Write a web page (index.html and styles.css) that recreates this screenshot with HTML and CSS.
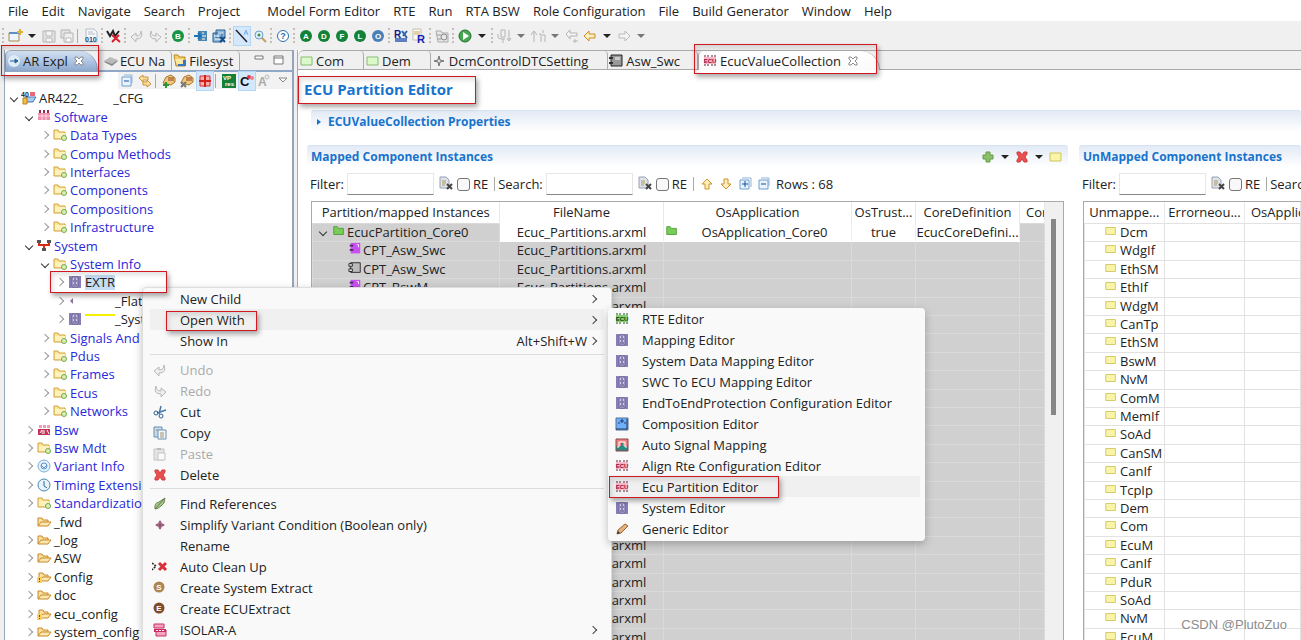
FILE: index.html
```
<!DOCTYPE html>
<html lang="en">
<head>
    <meta charset="UTF-8">
    <meta name="viewport" content="width=device-width, initial-scale=1.0">
    <title>ECU Partition Editor</title>
    <link rel="stylesheet" href="styles.css">
</head>
<body>
    <svg class="sprite" aria-hidden="true">
        <!-- toolbar -->
        <symbol id="i-new" viewBox="0 0 16 16"><path d="M2 5h10v8H2z" fill="#eef4fa" stroke="#a58b4a"/><path d="M2 4h10v2H2z" fill="#5c8fc8"/><path d="M13 1v6M10 4h6" stroke="#e0b030" stroke-width="2"/></symbol>
        <symbol id="i-save" viewBox="0 0 16 16"><path d="M2 3h12v11H2z" fill="#e4e4e4" stroke="#b4b4b4"/><path d="M5 3h6v5H5zM5 10h6v4H5z" fill="#f4f4f4" stroke="#bbb"/></symbol>
        <symbol id="i-saveall" viewBox="0 0 16 16"><path d="M2 2h9v8H2z" fill="#e4e4e4" stroke="#b4b4b4"/><path d="M5 5h9v9H5z" fill="#eee" stroke="#b4b4b4"/><path d="M7 10h5v4H7z" fill="#fff" stroke="#bbb"/></symbol>
        <symbol id="i-bin" viewBox="0 0 16 16"><path d="M3 1h8l3 3v10H3z" fill="#f4f6fa" stroke="#b7bcc8"/><path d="M5 4h5M5 6h7" stroke="#b7bcc8"/><text x="2" y="14" class="glyph" font-size="7" fill="#234a8c">010</text></symbol>
        <symbol id="i-wx" viewBox="0 0 16 16"><path d="M1 3l3 5 3-5 2 5 4-5" fill="none" stroke="#222" stroke-width="2"/><path d="M6 7l8 7M13 7l-7 7" stroke="#d8202c" stroke-width="2"/></symbol>
        <symbol id="i-undo" viewBox="0 0 16 16"><path d="M2 9l5-4v3q5 0 5-5 3 8-5 8v3z" fill="#eee" stroke="#b8b8b8"/></symbol>
        <symbol id="i-redo" viewBox="0 0 16 16"><path d="M14 9L9 5v3Q4 8 4 3q-3 8 5 8v3z" fill="#eee" stroke="#b8b8b8"/></symbol>
        <symbol id="i-b" viewBox="0 0 16 16"><circle cx="8" cy="8" r="6" fill="#169447"/><text x="8" y="11" class="glyph mid" font-size="8">B</text></symbol>
        <symbol id="i-a" viewBox="0 0 16 16"><circle cx="8" cy="8" r="6" fill="#128238"/><text x="8" y="11" class="glyph mid" font-size="8">A</text></symbol>
        <symbol id="i-d" viewBox="0 0 16 16"><circle cx="8" cy="8" r="6" fill="#128238"/><text x="8" y="11" class="glyph mid" font-size="8">D</text></symbol>
        <symbol id="i-f" viewBox="0 0 16 16"><circle cx="8" cy="8" r="6" fill="#128238"/><text x="8" y="11" class="glyph mid" font-size="8">F</text></symbol>
        <symbol id="i-l" viewBox="0 0 16 16"><circle cx="8" cy="8" r="6" fill="#128238"/><text x="8" y="11" class="glyph mid" font-size="8">L</text></symbol>
        <symbol id="i-o" viewBox="0 0 16 16"><circle cx="8" cy="8" r="6" fill="#4a80b8"/><text x="8" y="11" class="glyph mid" font-size="8">O</text></symbol>
        <symbol id="i-import" viewBox="0 0 16 16"><path d="M5 3h9v10H5z" fill="#4a86b0"/><path d="M1 8h6M5 5l3 3-3 3" fill="none" stroke="#1f72b8" stroke-width="2"/><path d="M9 5h2M9 8h4M9 11h3" stroke="#fff"/></symbol>
        <symbol id="i-import2" viewBox="0 0 16 16"><path d="M2 5h9v9H2zM5 2h9v8H5z" fill="#8ab8dc" stroke="#2a6090"/><path d="M3 8h5M7 5h5M4 11h7" stroke="#fff"/><path d="M9 9l5 5M14 9l-5 5" stroke="#174f88" stroke-width="2"/></symbol>
        <symbol id="i-mark" viewBox="0 0 16 16"><path d="M2 2l11 12" stroke="#223" stroke-width="1.5"/><path d="M10 7l2-5 2 5M11 5h2" fill="none" stroke="#7aaee8"/></symbol>
        <symbol id="i-search" viewBox="0 0 16 16"><path d="M9 9l5 5" stroke="#c8a058" stroke-width="2"/><circle cx="7" cy="7" r="4" fill="#dff0fc" stroke="#6b9fc8"/><circle cx="7" cy="7" r="1.5" fill="#3f9050"/></symbol>
        <symbol id="i-help" viewBox="0 0 16 16"><circle cx="8" cy="8" r="5.5" fill="#fff" stroke="#2a6dac"/><text x="8" y="11" class="glyph mid" font-size="9" fill="#2a6dac">?</text></symbol>
        <symbol id="i-rte" viewBox="0 0 16 16"><path d="M2 10h12v4H2z" fill="#5f7fc0"/><path d="M9 3l5 7M14 3l-4 5" stroke="#3560a8" stroke-width="2"/><text x="1" y="10" class="glyph" font-size="10" fill="#101890">R</text></symbol>
        <symbol id="i-rdoc" viewBox="0 0 16 16"><path d="M2 1h8v11H2z" fill="#fafafa" stroke="#c4bfa8"/><path d="M3 4h6M3 6h6" stroke="#c9a858"/><text x="6" y="15" class="glyph" font-size="11" fill="#1020b8">R</text></symbol>
        <symbol id="i-cam" viewBox="0 0 16 16"><path d="M2 3h5l1 2h6v9H4z" fill="#e8e8e8" stroke="#aaa"/><circle cx="10" cy="9" r="3" fill="none" stroke="#888"/><path d="M3 7h4M4 11h3" stroke="#999"/></symbol>
        <symbol id="i-run" viewBox="0 0 16 16"><circle cx="8" cy="8" r="6" fill="#48a850" stroke="#1f7030"/><path d="M6 4l6 4-6 4z" fill="#fff"/></symbol>
        <symbol id="i-step" viewBox="0 0 16 16"><path d="M5 2h4v7H5zM2 6v3q0 2 4 2h3M7 11v4M13 2v10M11 10l2 3 2-3" fill="none" stroke="#b4b4b4"/></symbol>
        <symbol id="i-step2" viewBox="0 0 16 16"><path d="M4 14V4M1 7l3-4 3 4M9 6h2v8M13 2v3M12 7h3v7" fill="none" stroke="#b4b4b4"/></symbol>
        <symbol id="i-last" viewBox="0 0 16 16"><path d="M2 6l4-4v3h7v3H6v3z" fill="#f4f4f4" stroke="#b4b4b4"/><path d="M9 13h5M11 11v4" stroke="#b4b4b4"/></symbol>
        <symbol id="i-back" viewBox="0 0 16 16"><path d="M2 8l5-5v3h6v4H7v3z" fill="#fff0c0" stroke="#c88f28"/></symbol>
        <symbol id="i-fwd" viewBox="0 0 16 16"><path d="M14 8L9 3v3H3v4h6v3z" fill="#f4f4f4" stroke="#bbb"/></symbol>
        <symbol id="i-caret" viewBox="0 0 10 16"><path d="M1 6h8l-4 4z" fill="currentColor"/></symbol>
        <symbol id="i-triangle" viewBox="0 0 12 16"><path d="M2 5h8l-4 4z" fill="#fff" stroke="#888"/></symbol>
        <symbol id="i-min" viewBox="0 0 14 16"><path d="M3 4h8v3H3z" fill="#fff" stroke="#777"/></symbol>
        <symbol id="i-max" viewBox="0 0 14 16"><path d="M3 4h9v8H3zM3 6h9" fill="#fff" stroke="#777"/></symbol>
        <symbol id="i-close" viewBox="0 0 12 12"><path d="M2 2h2l2 2 2-2h2v2L8 6l2 2v2H8L6 8l-2 2H2V8l2-2-2-2z" fill="#fff" stroke="#888"/></symbol>
        <!-- explorer -->
        <symbol id="i-ar" viewBox="0 0 16 16"><circle cx="8" cy="8" r="6" fill="#dcecf8"/><path d="M4 8h6M9 6l3 2-3 2z" fill="#246098" stroke="#246098"/></symbol>
        <symbol id="i-ecu" viewBox="0 0 16 16"><path d="M1 9l6-4 8 3-6 5z" fill="#888"/><path d="M1 8l6-4 8 3-6 4z" fill="#bbb"/></symbol>
        <symbol id="i-fs" viewBox="0 0 16 16"><path d="M2 2h4l1 2h6v9H4z" fill="#f4cf68" stroke="#b88828"/><path d="M6 7h8v6H6z" fill="#3876c0"/><path d="M3 6h8v5H5z" fill="#fae8a8"/></symbol>
        <symbol id="i-collapse" viewBox="0 0 16 16"><path d="M5 2h8v8" fill="none" stroke="#8fb4d8"/><path d="M3 4h9v9H3z" fill="#e8f3fc" stroke="#6f9fd0"/><path d="M5 8h5" stroke="#174f98"/></symbol>
        <symbol id="i-expand" viewBox="0 0 16 16"><path d="M5 2h9v9" fill="none" stroke="#8fb4d8"/><path d="M3 4h9v9H3z" fill="#e8f3fc" stroke="#6f9fd0"/><path d="M5 8h6M8 5v6" stroke="#174f98"/></symbol>
        <symbol id="i-link" viewBox="0 0 16 16"><path d="M2 5l4-3v2h5v3H6v2zM14 11l-4 3v-2H6V9h4V7z" fill="#fae0a0" stroke="#cc9638"/></symbol>
        <symbol id="i-pack" viewBox="0 0 16 16"><path d="M2 10l3-6 5-2 4 3v4l-4 3z" fill="#f0c878" stroke="#a87830"/><path d="M8 4v4M10 4v4M12 4v4" stroke="#943f28"/><path d="M2 12h6M5 9v6" stroke="#2d9438" stroke-width="2"/></symbol>
        <symbol id="i-pack2" viewBox="0 0 16 16"><path d="M2 10l3-6 5-2 4 3v4l-4 3z" fill="#f0c878" stroke="#a87830"/><path d="M8 4v4M10 4v4M12 4v4" stroke="#943f28"/><path d="M2 9l5 5M7 9l-5 5" stroke="#777" stroke-width="2"/></symbol>
        <symbol id="i-grid" viewBox="0 0 16 16"><path d="M3 3h10v10H3z" fill="#f6b0a8" stroke="#d83030"/><path d="M8 2v12M2 8h12" stroke="#d02020" stroke-width="2"/></symbol>
        <symbol id="i-vp" viewBox="0 0 16 16"><path d="M1 1h14v14H1z" fill="#158038"/><text x="2" y="7" class="glyph" font-size="6" fill="#fff">VP</text><text x="4" y="13" class="glyph" font-size="6" fill="#fff">res</text></symbol>
        <symbol id="i-c" viewBox="0 0 16 16"><text x="1" y="13" class="glyph" font-size="13" fill="#111">C</text><circle cx="10" cy="4" r="2" fill="#e83040"/><circle cx="13" cy="5" r="2" fill="#f08088"/></symbol>
        <symbol id="i-ag" viewBox="0 0 16 16"><text x="1" y="13" class="glyph" font-size="12" fill="#aaa">A</text><circle cx="10" cy="4" r="2" fill="#eee" stroke="#bbb"/></symbol>
        <symbol id="i-project" viewBox="0 0 16 16"><path d="M4 7h11l-3 5H5z" fill="#a8cdf0" stroke="#4f74b0"/><text x="0" y="7" class="glyph" font-size="7" fill="#222">40</text><path d="M9 2h5v4H9z" fill="#e86878"/><path d="M2 8h4v6H2z" fill="#f8c040" stroke="#b88020"/></symbol>
        <symbol id="i-sw" viewBox="0 0 16 16"><path d="M2 4h12v7H2z" fill="#f090b0"/><path d="M3 1h2v3H3zM7 1h2v3H7zM11 1h2v3h-2z" fill="#982848"/><path d="M2 7h12M6 5v6M10 5v6" stroke="#fbd4e0"/></symbol>
        <symbol id="i-system" viewBox="0 0 16 16"><path d="M3 4v3h10V4M8 7v4" fill="none" stroke="#d82818" stroke-width="2"/><path d="M1 2h4v3H1zM11 2h4v3h-4zM6 10h4v3H6z" fill="#555"/></symbol>
        <symbol id="i-folder" viewBox="0 0 16 16"><path d="M2 3h4l1 2h6v7H2z" fill="#fae79c" stroke="#d0a23c"/><path d="M3 6h10v5H3z" fill="#fdf2be"/><circle cx="12" cy="11" r="2.5" fill="#d8efb8" stroke="#76a848"/></symbol>
        <symbol id="i-open" viewBox="0 0 16 16"><path d="M2 12V4h4l1 2h5v2" fill="#fae0a0" stroke="#c88828"/><path d="M2 12l3-4h10l-3 4z" fill="#fbe8b0" stroke="#c88828"/></symbol>
        <symbol id="i-openw" viewBox="0 0 16 16"><path d="M3 12V4h4l1 2h4v2" fill="#fae0a0" stroke="#c88828"/><path d="M3 12l4-4h8l-3 4z" fill="#fbe8b0" stroke="#c88828"/><path d="M1 8h5v6H1z" fill="#fbd060"/><path d="M3.500 9v2M3.500 12v1" stroke="#7a4a10"/></symbol>
        <symbol id="i-chip" viewBox="0 0 16 16"><path d="M2 2h12v12H2z" fill="#9c90cc"/><path d="M3 2v12M13 2v12" stroke="#7468a8"/><path d="M5 3h6v10H5z" fill="#d4ccf0" stroke="#5a5484"/><path d="M8 4v2M6 7h4M8 8v2M6 11h4" stroke="#3a3464"/></symbol>
        <symbol id="i-flat" viewBox="0 0 16 16"><path d="M3 8l3-3v6z" fill="#86749c"/></symbol>
        <symbol id="i-bsw" viewBox="0 0 16 16"><path d="M2 7h12v6H2z" fill="#c83058"/><path d="M3 3h3v3H3zM7 3h3v3H7zM11 3h3v3h-3z" fill="#f09cb4"/><path d="M4 11l2-3v4M8 8v4M11 8l2 4" stroke="#fff"/></symbol>
        <symbol id="i-variant" viewBox="0 0 16 16"><circle cx="8" cy="8" r="6" fill="#e6f2fc" stroke="#7cacd4"/><circle cx="8" cy="8" r="3" fill="none" stroke="#5f94c8"/><path d="M5 7l3 3 3-3" fill="none" stroke="#5f94c8"/></symbol>
        <symbol id="i-timing" viewBox="0 0 16 16"><circle cx="8" cy="8" r="6" fill="#e8f4fc" stroke="#4c86ac"/><path d="M8 4v5l3 2" fill="none" stroke="#346890"/></symbol>
        <!-- context menus -->
        <symbol id="i-cut" viewBox="0 0 16 16"><path d="M9 2L7 10M14 6L5 9" stroke="#4a78a8" stroke-width="1.500"/><circle cx="4" cy="9" r="2" fill="none" stroke="#2f6090"/><circle cx="9" cy="12" r="2" fill="none" stroke="#2f6090"/></symbol>
        <symbol id="i-copy" viewBox="0 0 16 16"><path d="M2 2h8v10H2z" fill="#c6daec" stroke="#6890b4"/><path d="M6 5h8v9H6z" fill="#f4f8fc" stroke="#6890b4"/><path d="M8 8h4M8 10h4M8 12h4M4 5h2" stroke="#a09068"/></symbol>
        <symbol id="i-paste" viewBox="0 0 16 16"><path d="M2 3h10v11H2z" fill="#e4e4e4" stroke="#c4c4c4"/><path d="M5 2h4v2H5z" fill="#bbb"/><path d="M6 7h7v7H6z" fill="#fafafa" stroke="#c4c4c4"/></symbol>
        <symbol id="i-delete" viewBox="0 0 16 16"><path d="M3 3h3l2 3 2-3h3v2l-2 3 2 3v2h-3l-2-3-2 3H3v-2l2-3-2-3z" fill="#e85050" stroke="#d03c3c"/></symbol>
        <symbol id="i-leaf" viewBox="0 0 16 16"><path d="M3 13q-1-6 4-7l6-4q0 6-4 8-3 3-6 3z" fill="#a8c888" stroke="#6c8858"/><path d="M3 13l9-10" stroke="#5c7c48"/></symbol>
        <symbol id="i-diamond" viewBox="0 0 16 16"><path d="M8 3l2 3 3 2-3 2-2 3-2-3-3-2 3-2z" fill="#b88098"/><path d="M8 4v8M4 8h8" stroke="#804060"/></symbol>
        <symbol id="i-greydiamond" viewBox="0 0 16 16"><path d="M8 3l1 4 4 1-4 1-1 4-1-4-4-1 4-1z" fill="#ddd" stroke="#707070"/></symbol>
        <symbol id="i-clean" viewBox="0 0 16 16"><path d="M0 4l4 3-4 4" fill="none" stroke="#222" stroke-width="1.500" stroke-dasharray="2 1"/><path d="M7 4l7 7M14 4l-7 7" stroke="#d83038" stroke-width="3"/></symbol>
        <symbol id="i-s" viewBox="0 0 16 16"><circle cx="7" cy="7" r="5.500" fill="#b08450"/><text x="7" y="10" class="glyph mid" font-size="8">S</text></symbol>
        <symbol id="i-e" viewBox="0 0 16 16"><circle cx="7" cy="7" r="5.500" fill="#804c28"/><text x="7" y="10" class="glyph mid" font-size="8">E</text></symbol>
        <symbol id="i-isolar" viewBox="0 0 16 16"><path d="M2 2h10v4H2zM4 8h10v6H4z" fill="#f4a4bc" stroke="#c83060"/><path d="M2 7h12v3H2z" fill="#d02860"/><path d="M4 8.500h8" stroke="#fff" stroke-dasharray="2 1"/></symbol>
        <symbol id="i-ecugreen" viewBox="0 0 16 16"><path d="M2 4h12v7H2z" fill="#84d070"/><path d="M3 2v2M6 2v2M10 2v2M13 2v2M3 11v2M6 11v2M10 11v2M13 11v2" stroke="#234a20"/><text x="8" y="10" class="glyph mid" font-size="6" fill="#103c10">ECU</text></symbol>
        <symbol id="i-ecupink" viewBox="0 0 16 16"><path d="M2 4h12v7H2z" fill="#f8b4c8"/><path d="M3 2v2M6 2v2M10 2v2M13 2v2M3 11v2M6 11v2M10 11v2M13 11v2" stroke="#582038"/><text x="8" y="10" class="glyph mid" font-size="6" fill="#900c38">ECU</text></symbol>
        <symbol id="i-comp" viewBox="0 0 16 16"><path d="M2 2h12v12H2z" fill="#6fb0f8" stroke="#507098"/><path d="M2 13h11V3" fill="none" stroke="#223c60"/><path d="M4 7h2M10 7h2M7 4h2v2H7z" fill="none" stroke="#203870"/></symbol>
        <symbol id="i-signal" viewBox="0 0 16 16"><path d="M2 2h12v7H2z" fill="#f08080"/><path d="M2 9h12v5H2z" fill="#2c8880"/><path d="M3 10h2V5h6v5h2" fill="none" stroke="#fff"/><path d="M7 6h2v8H7z" fill="#2c8880"/><path d="M2 2h12v12H2z" fill="none" stroke="#884848"/></symbol>
        <symbol id="i-pencil" viewBox="0 0 16 16"><path d="M3 13l1-4 7-6 3 2-7 7z" fill="#e8b078" stroke="#94643c"/><path d="M3 13l1-3 2 2z" fill="#333"/></symbol>
        <!-- editor -->
        <symbol id="i-notegreen" viewBox="0 0 16 16"><path d="M3 4h11v8H3z" fill="#d8fac8" stroke="#8cba74"/></symbol>
        <symbol id="i-note" viewBox="0 0 16 16"><path d="M2 4h11v8H2z" fill="#faf4a8" stroke="#cfc45c"/></symbol>
        <symbol id="i-swc" viewBox="0 0 16 16"><path d="M3 2h11v11H3z" fill="#999" stroke="#222"/><path d="M1 4h4v2H1zM1 9h4v2H1z" fill="#333"/><path d="M7 4h5v3H7z" fill="#ccc"/></symbol>
        <symbol id="i-swcgrey" viewBox="0 0 16 16"><path d="M3 2h11v11H3z" fill="#bbb" stroke="#222"/><path d="M1 3h4v3H1zM1 9h4v3H1z" fill="#ddd" stroke="#222"/></symbol>
        <symbol id="i-swcpurple" viewBox="0 0 16 16"><path d="M3 1h11v12H3z" fill="#c850f0"/><path d="M2 3h4v2H2zM2 8h4v2H2z" fill="#502070"/><path d="M10 3h2v3" fill="none" stroke="#fff"/></symbol>
        <symbol id="i-foldergreen" viewBox="0 0 16 16"><path d="M2 3h4l1 2h6v7H2z" fill="#78cc58" stroke="#4f9a38"/></symbol>
        <symbol id="i-plus" viewBox="0 0 16 16"><path d="M6 3h4v3h3v4h-3v3H6v-3H3V6h3z" fill="#8cc068" stroke="#649c48"/></symbol>
        <symbol id="i-up" viewBox="0 0 16 16"><path d="M8 3l5 5h-3v5H6V8H3z" fill="#fdf0b8" stroke="#d0902c"/></symbol>
        <symbol id="i-down" viewBox="0 0 16 16"><path d="M8 13l5-5h-3V3H6v5H3z" fill="#fdf0b8" stroke="#d0902c"/></symbol>
        <symbol id="i-clear" viewBox="0 0 16 16"><path d="M2 1h6l3 3v8H2z" fill="#dde4ee" stroke="#98a0b0"/><path d="M4 5h4M4 7h4M4 9h3" stroke="#b09850"/><path d="M9 8l5 5M14 8l-5 5" stroke="#444" stroke-width="2"/></symbol>
    </svg>

    <div class="app">
        <nav class="menubar">
            <button>File</button><button>Edit</button><button>Navigate</button><button>Search</button><button>Project</button>
            <button class="apart">Model Form Editor</button><button>RTE</button><button>Run</button><button>RTA BSW</button>
            <button>Role Configuration</button><button>File</button><button>Build Generator</button><button>Window</button><button>Help</button>
        </nav>
        <div class="toolbar" id="mainToolbar"></div>

        <div class="workbench">
            <aside class="explorer">
                <div class="tabs">
                    <button class="tab active blue"><svg class="icon"><use href="#i-ar"/></svg>AR Expl<svg class="x"><use href="#i-close"/></svg></button>
                    <button class="tab"><svg class="icon"><use href="#i-ecu"/></svg>ECU Na</button>
                    <button class="tab"><svg class="icon"><use href="#i-fs"/></svg>Filesyst</button>
                    <span class="window-buttons">
                        <button class="tool" aria-label="Minimize"><svg class="icon"><use href="#i-min"/></svg></button>
                        <button class="tool" aria-label="Maximize"><svg class="icon"><use href="#i-max"/></svg></button>
                    </span>
                </div>
                <div class="explorer-tools"><div class="toolbar" id="treeToolbar"></div></div>
                <ul class="tree" id="tree"></ul>
            </aside>

            <main class="editor">
                <div class="tabs">
                    <button class="tab"><svg class="icon"><use href="#i-notegreen"/></svg>Com</button>
                    <button class="tab"><svg class="icon"><use href="#i-notegreen"/></svg>Dem</button>
                    <button class="tab"><svg class="icon"><use href="#i-greydiamond"/></svg>DcmControlDTCSetting</button>
                    <button class="tab tight"><svg class="icon"><use href="#i-swc"/></svg>Asw_Swc</button>
                    <button class="tab active"><svg class="icon"><use href="#i-ecupink"/></svg>EcucValueCollection<svg class="x"><use href="#i-close"/></svg></button>
                </div>
                <h1>ECU Partition Editor</h1>
                <h2 class="section-head properties"><span class="twist"></span>ECUValueCollection Properties</h2>
                <div class="sections">
                    <section>
                        <div class="section-head">
                            <h2>Mapped Component Instances</h2>
                            <div class="section-tools" id="sectionTools"></div>
                        </div>
                        <div class="filter-row">
                            <label for="filter1">Filter:</label><input type="text" id="filter1">
                            <svg class="icon"><use href="#i-clear"/></svg><label class="check"><input type="checkbox">RE</label>
                            <i class="bar"></i>
                            <label for="search1">Search:</label><input type="text" id="search1">
                            <svg class="icon"><use href="#i-clear"/></svg><label class="check"><input type="checkbox">RE</label>
                            <i class="bar"></i>
                            <span class="row-tools" id="rowTools"></span>
                            <span>Rows : 68</span>
                        </div>
                        <div class="table-box">
                            <table class="mapped">
                                <colgroup><col class="c-part"><col class="c-file"><col class="c-os"><col class="c-trust"><col class="c-core"><col></colgroup>
                                <thead><tr><th>Partition/mapped Instances</th><th>FileName</th><th>OsApplication</th><th>OsTrust...</th><th>CoreDefinition</th><th class="cut">Cor</th></tr></thead>
                                <tbody id="mappedRows"></tbody>
                            </table>
                            <div class="scroll"><div class="thumb"></div></div>
                        </div>
                    </section>
                    <section>
                        <div class="section-head"><h2>UnMapped Component Instances</h2></div>
                        <div class="filter-row">
                            <label for="filter2">Filter:</label><input type="text" id="filter2">
                            <svg class="icon"><use href="#i-clear"/></svg><label class="check"><input type="checkbox">RE</label>
                            <i class="bar"></i>
                            <span>Search:</span>
                        </div>
                        <div class="table-box">
                            <table class="unmapped">
                                <colgroup><col class="c-name"><col class="c-name"><col></colgroup>
                                <thead><tr><th>Unmappe...</th><th>Errorneou...</th><th class="cut">OsApplication</th></tr></thead>
                                <tbody id="unmappedRows"></tbody>
                            </table>
                        </div>
                    </section>
                </div>
            </main>
        </div>
    </div>

    <div class="menu context" id="contextMenu"></div>
    <div class="menu submenu" id="openWithMenu"></div>

    <div class="mark mark-explorer"></div>
    <div class="mark mark-title"></div>
    <div class="mark mark-tab"></div>
    <div class="mark mark-extract"></div>
    <div class="mark mark-open"></div>
    <div class="mark mark-partition"></div>
    <div class="watermark">CSDN @PlutoZuo</div>

    <script src="script.js"></script>
</body>
</html>
```
FILE: styles.css
```
* {
    margin: 0;
    padding: 0;
    box-sizing: border-box;
}

body {
    font-family: "Open Sans", "Noto Sans", sans-serif;
    font-size: 13px;
    line-height: 18px;
    color: #222;
    background: #f0f0f0;
    height: 100vh;
    overflow: hidden;
    position: relative;
}

button {
    font: inherit;
    color: inherit;
    background: none;
    border: none;
    white-space: nowrap;
}

.sprite {
    display: none;
}

.glyph {
    font-family: "Liberation Sans", sans-serif;
    font-weight: bold;
}

.mid {
    text-anchor: middle;
}

.mid:not([fill]) {
    fill: #fff;
}

.icon {
    width: 16px;
    height: 16px;
    flex: none;
}

.app {
    height: 100vh;
    display: flex;
    flex-direction: column;
}

/* menu bar and toolbars */
.menubar {
    background: #fff;
    height: 21px;
    display: flex;
    align-items: center;
    gap: 13px;
    padding: 0 8px;
    flex: none;
}

.menubar .apart {
    margin-left: 14px;
}

.toolbar {
    display: flex;
    align-items: center;
    gap: 2px;
    height: 29px;
    padding-left: 2px;
    flex: none;
}

.tool {
    display: flex;
    align-items: center;
    justify-content: center;
    width: 16px;
    height: 18px;
}

.tool.caret {
    width: 14px;
}

.tool.caret .icon {
    width: 10px;
}

.tool.dim {
    color: #777;
}

.tool.on {
    background: #d3e8fa;
    outline: 1px solid #b4d6f4;
}

.grip {
    width: 3px;
    height: 15px;
    border-left: 2px dotted #c4c0b8;
}

.bar {
    width: 4px;
    height: 14px;
    border-left: 1px solid #aaa;
}

.workbench {
    flex: 1;
    min-height: 0;
    display: flex;
    gap: 3px;
    padding-left: 4px;
}

/* tabs */
.tabs {
    display: flex;
    height: 20px;
    flex: none;
    border-top: 1px solid #aaa;
    border-bottom: 1px solid #aaa;
    border-radius: 6px 0 0 0;
    background: #f0f0f0;
}

.tab {
    display: flex;
    align-items: center;
    gap: 2px;
    height: 19px;
    border-right: 1px solid #aaa;
    border-radius: 0 4px 0 0;
}

.tab .x {
    width: 12px;
    height: 12px;
    margin-left: 4px;
}

.tab.active {
    background: linear-gradient(#fff, #fafafa);
    border: 1px solid #aaa;
    border-width: 0 1px 0 1px;
    border-radius: 6px 24px 0 0;
}

.tab.blue {
    background: linear-gradient(#d4e2f4, #90acd0);
    border-color: #7f98bc;
}

/* explorer */
.explorer {
    width: 290px;
    flex: none;
    display: flex;
    flex-direction: column;
    overflow: hidden;
    background: #fff;
    border: solid #94a4ba;
    border-width: 0 2px 0 1px;
}

.explorer .tabs {
    border-bottom: 2px solid #90a8c8;
    height: 22px;
}

.explorer .tab {
    padding-right: 6px;
    gap: 1px;
}

.explorer .tab.blue {
    padding-right: 12px;
    margin-right: 5px;
}

.window-buttons {
    display: flex;
    gap: 3px;
    margin-left: auto;
    padding-right: 6px;
}

.explorer-tools {
    display: flex;
    justify-content: flex-end;
}

.explorer-tools .toolbar {
    height: 17px;
    background: #f2f2f2;
    padding: 0 1px;
}

.tree {
    list-style: none;
}

.tree li {
    display: flex;
    align-items: center;
    gap: 2px;
    height: 18px;
    white-space: nowrap;
}

/* rows average a little over 18px, as in the tables */
.tree li:nth-child(5n+2),
.tree li:nth-child(5n+4),
tbody tr:nth-child(5n+2),
tbody tr:nth-child(5n+4) {
    height: 19px;
}

.tree .blue {
    color: #2a28d8;
}

.l0 { padding-left: 3px; }
.l1 { padding-left: 18px; }
.l2 { padding-left: 34px; }
.l3 { padding-left: 49px; }

.chevron {
    width: 11px;
    height: 18px;
    flex: none;
    display: flex;
    align-items: center;
    justify-content: center;
}

.chevron::before {
    content: "";
    width: 5px;
    height: 5px;
    border: solid #999;
    border-width: 1px 1px 0 0;
    transform: rotate(45deg);
}

.chevron.down::before {
    border-color: #333;
    transform: rotate(135deg);
}

.chevron.none::before {
    display: none;
}

.selected {
    display: block;
    background: #c4dcf4;
    height: 15px;
    line-height: 15px;
}

.blank {
    display: inline-block;
    width: 30px;
    height: 10px;
}

.blank.yellow {
    border-top: 2px solid #f4f000;
}

/* editor */
.editor {
    flex: 1;
    min-width: 0;
    background: #fff;
    border-left: 1px solid #aaa;
    display: flex;
    flex-direction: column;
    overflow: hidden;
}

.editor .tab {
    padding-right: 19px;
}

.editor .tab.tight {
    padding-right: 17px;
}

.editor .tab.active {
    padding: 0 20px 0 3px;
}

h1 {
    font-size: 15px;
    line-height: 24px;
    color: #1873cc;
    padding: 7px 6px 9px;
}

h2 {
    font-size: 12px;
    line-height: 20px;
    color: #1873cc;
}

.section-head {
    display: flex;
    align-items: center;
    justify-content: space-between;
    height: 22px;
    padding: 0 4px;
    border-top: 1px solid #d8e2f2;
    border-radius: 3px 3px 0 0;
    background: linear-gradient(#e2eaf6, #fff);
}

.properties {
    justify-content: flex-start;
    margin: 0 0 13px 13px;
    gap: 7px;
    flex: none;
}

.twist {
    width: 0;
    border: 3px solid transparent;
    border-left: 4px solid #1873cc;
    border-right: none;
    margin-left: 2px;
}

.sections {
    display: grid;
    grid-template-columns: minmax(0, 1fr) 222px;
    gap: 11px;
    padding-left: 9px;
    flex: 1;
    min-height: 0;
}

.sections section {
    min-width: 0;
    overflow: hidden;
    display: flex;
    flex-direction: column;
}

.section-tools,
.row-tools {
    display: flex;
    align-items: center;
    gap: 2px;
}

.filter-row {
    display: flex;
    align-items: center;
    gap: 3px;
    height: 34px;
    padding: 0 3px;
    white-space: nowrap;
    flex: none;
}

.filter-row input[type="text"] {
    width: 87px;
    height: 22px;
    border: 1px solid #e6e6e6;
    border-bottom-color: #888;
    background: #fff;
    margin-right: 1px;
}

.check {
    display: flex;
    align-items: center;
    gap: 3px;
}

.check input {
    appearance: none;
    width: 13px;
    height: 13px;
    border: 1px solid #777;
    border-radius: 3px;
    background: #f8f8f8;
}

.filter-row .bar {
    margin-left: 3px;
    width: 1px;
}

.row-tools {
    gap: 3px;
    padding: 0 1px 0 2px;
}

.table-box {
    display: flex;
    flex: 1;
    min-height: 0;
    overflow: hidden;
    margin: 0 4px;
    border: 1px solid #aaa;
    border-bottom: none;
}

section:last-child .table-box {
    margin-right: 0;
    border-right: none;
}

table {
    table-layout: fixed;
    border-collapse: collapse;
    width: 100%;
    height: 1px;
}

.c-part { width: 187px; }
.c-file { width: 164px; }
.c-os { width: 188px; }
.c-trust { width: 64px; }
.c-core { width: 104px; }
.c-name { width: 80px; }

th {
    font-weight: normal;
    height: 21px;
    border-right: 1px solid #e8e8e8;
}

th.cut {
    text-align: left;
    padding-left: 6px;
}

th,
td {
    overflow: hidden;
    white-space: nowrap;
}

tr {
    height: 18px;
}

td {
    text-align: center;
    border: 1px solid #e2e2e2;
    line-height: 17px;
}

.mapped td {
    background: #d0d0d0;
    border-color: #dadada;
}

.mapped td.white {
    background: #fff;
    border-color: #fff #eee;
}

.cell {
    display: flex;
    align-items: center;
    height: 17px;
}

.cell .icon {
    height: 17px;
    padding-bottom: 3px;
}

.mapped .cell {
    padding-left: 4px;
}

.mapped .cell .icon {
    margin: 0 0 0 3px;
}

.mapped .child {
    padding-left: 34px;
}

.mapped .child .icon {
    margin-left: 0;
}

.mapped .os {
    padding-left: 0;
}

.mapped .os .icon {
    margin-left: 0;
}

.os span {
    flex: 1;
    padding-right: 2px;
}

.unmapped .cell {
    padding-left: 18px;
    gap: 1px;
}

.scroll {
    width: 18px;
    flex: none;
    background: #f0f0f0;
    padding: 17px 6px;
}

.thumb {
    width: 5px;
    height: 196px;
    background: #868686;
}

/* pop-up menus */
.menu {
    position: absolute;
    background: #f9f9f9;
    border-radius: 4px;
    box-shadow: 0 3px 8px rgba(0, 0, 0, 0.25);
}

.context {
    left: 142px;
    top: 287px;
    width: 470px;
    padding: 0 7px 20px;
    border: 1px solid #ddd;
}

.submenu {
    left: 608px;
    top: 308px;
    width: 317px;
    padding: 0 5px 2px 2px;
}

.menu button {
    display: flex;
    align-items: center;
    width: 100%;
    height: 21px;
    padding: 0 6px 0 2px;
    text-align: left;
}

.menu button .icon {
    margin: 0 12px 0 0;
}

.submenu button {
    padding-left: 4px;
}

.menu button.hover {
    background: #f0f0f0;
}

.menu button:disabled {
    color: #aaa;
}

.menu .label {
    flex: 1;
}

.menu .chevron::before {
    border-color: #444;
}

.menu hr {
    border: none;
    border-top: 1px solid #ddd;
    margin: 3px 0 4px;
}

/* highlights drawn over the window */
.mark {
    position: absolute;
    border: 1px solid #d01820;
    box-shadow: 2px 3px 5px rgba(0, 0, 0, 0.35), inset 2px 3px 5px rgba(0, 0, 0, 0.12);
}

.mark-explorer { left: 1px; top: 45px; width: 98px; height: 31px; }
.mark-title { left: 298px; top: 76px; width: 178px; height: 28px; }
.mark-tab { left: 694px; top: 44px; width: 183px; height: 30px; }
.mark-extract { left: 50px; top: 271px; width: 117px; height: 22px; }
.mark-open { left: 166px; top: 311px; width: 91px; height: 20px; }
.mark-partition { left: 609px; top: 476px; width: 170px; height: 22px; }

.watermark {
    position: absolute;
    right: 14px;
    bottom: 6px;
    font-family: "Liberation Sans", sans-serif;
    font-size: 13px;
    color: #8c8c8c;
    text-shadow: 1px 1px 0 #fff;
}
```
FILE: script.js
```
const icon = (name) => `<svg class="icon"><use href="#i-${name}"/></svg>`;
const byId = (id) => document.getElementById(id);

// "|" is a grip, "/" a separator, "v" a drop-down arrow, "*" marks a pressed button
function tools(list) {
    return list.split(' ').map((t) => {
        if (t === '|') return '<i class="grip"></i>';
        if (t === '/') return '<i class="bar"></i>';
        if (t === 'v') return `<button class="tool caret" aria-label="More">${icon('caret')}</button>`;
        if (t === 'vd') return `<button class="tool caret dim" aria-label="More">${icon('caret')}</button>`;
        const on = t[0] === '*';
        const name = on ? t.slice(1) : t;
        return `<button class="tool${on ? ' on' : ''}" aria-label="${name}">${icon(name)}</button>`;
    }).join('');
}

byId('mainToolbar').innerHTML = tools('| new v save saveall / bin | wx | undo redo | b | import import2 | *mark search | help | a d f l o | rte rdoc | cam | run v | step vd step2 vd last back v fwd vd');
byId('treeToolbar').innerHTML = tools('collapse link / pack pack2 *grid / vp *c ag triangle');
byId('sectionTools').innerHTML = tools('plus v delete v note');
byId('rowTools').innerHTML = tools('up down expand collapse');

// [level, chevron, icon, text, blue]
const tree = [
    [0, 'down', 'project', 'AR422_<span class="blank"></span>_CFG'],
    [1, 'down', 'sw', 'Software', 1],
    [2, '', 'folder', 'Data Types', 1],
    [2, '', 'folder', 'Compu Methods', 1],
    [2, '', 'folder', 'Interfaces', 1],
    [2, '', 'folder', 'Components', 1],
    [2, '', 'folder', 'Compositions', 1],
    [2, '', 'folder', 'Infrastructure', 1],
    [1, 'down', 'system', 'System', 1],
    [2, 'down', 'folder', 'System Info', 1],
    [3, '', 'chip', '<span class="selected">EXTR</span>'],
    [3, '', 'flat', '<span class="blank"></span>_Flat'],
    [3, '', 'chip', '<span class="blank yellow"></span>_Syst'],
    [2, '', 'folder', 'Signals And', 1],
    [2, '', 'folder', 'Pdus', 1],
    [2, '', 'folder', 'Frames', 1],
    [2, '', 'folder', 'Ecus', 1],
    [2, '', 'folder', 'Networks', 1],
    [1, '', 'bsw', 'Bsw', 1],
    [1, '', 'folder', 'Bsw Mdt', 1],
    [1, '', 'variant', 'Variant Info', 1],
    [1, '', 'timing', 'Timing Extensions', 1],
    [1, '', 'folder', 'Standardization', 1],
    [1, 'none', 'open', '_fwd'],
    [1, '', 'open', '_log'],
    [1, '', 'open', 'ASW'],
    [1, '', 'openw', 'Config'],
    [1, '', 'open', 'doc'],
    [1, '', 'openw', 'ecu_config'],
    [1, '', 'open', 'system_config']
];
byId('tree').innerHTML = tree.map(([level, chevron, ic, text, blue]) =>
    `<li class="l${level}${blue ? ' blue' : ''}"><i class="chevron ${chevron}"></i>${icon(ic)}<span>${text}</span></li>`
).join('');

const file = 'Ecuc_Partitions.arxml';
let rows = `<tr><td><div class="cell"><i class="chevron down"></i>${icon('foldergreen')}EcucPartition_Core0</div></td>
    <td class="white">${file}</td><td class="white"><div class="cell os">${icon('foldergreen')}<span>OsApplication_Core0</span></div></td>
    <td class="white">true</td><td class="white">EcucCoreDefini...</td><td></td></tr>`;
for (let i = 0; i < 22; i++) {
    const name = i < 2 ? 'CPT_Asw_Swc' : 'CPT_BswM';
    rows += `<tr><td><div class="cell child">${icon(i === 1 ? 'swcgrey' : 'swcpurple')}${name}</div></td><td>${file}</td><td></td><td></td><td></td><td></td></tr>`;
}
byId('mappedRows').innerHTML = rows;

const modules = ['Dcm', 'WdgIf', 'EthSM', 'EthIf', 'WdgM', 'CanTp', 'EthSM', 'BswM', 'NvM', 'ComM', 'MemIf', 'SoAd',
    'CanSM', 'CanIf', 'TcpIp', 'Dem', 'Com', 'EcuM', 'CanIf', 'PduR', 'SoAd', 'NvM', 'EcuM'];
byId('unmappedRows').innerHTML = modules.map((m) =>
    `<tr><td><div class="cell">${icon('note')}${m}</div></td><td></td><td></td></tr>`
).join('');

// [icon, label, options]
function menu(items) {
    return items.map((it) => {
        if (!it) return '<hr>';
        const [ic, label, o = {}] = it;
        return `<button class="${o.hover ? 'hover' : ''}"${o.disabled ? ' disabled' : ''}>${ic ? icon(ic) : '<i class="icon"></i>'}` +
            `<span class="label">${label}</span>${o.key || ''}${o.more ? '<i class="chevron"></i>' : ''}</button>`;
    }).join('');
}

byId('contextMenu').innerHTML = menu([
    ['', 'New Child', { more: 1 }],
    ['', 'Open With', { more: 1, hover: 1 }],
    ['', 'Show In', { more: 1, key: 'Alt+Shift+W' }],
    null,
    ['undo', 'Undo', { disabled: 1 }],
    ['redo', 'Redo', { disabled: 1 }],
    ['cut', 'Cut'],
    ['copy', 'Copy'],
    ['paste', 'Paste', { disabled: 1 }],
    ['delete', 'Delete'],
    null,
    ['leaf', 'Find References'],
    ['diamond', 'Simplify Variant Condition (Boolean only)'],
    ['', 'Rename'],
    ['clean', 'Auto Clean Up'],
    ['s', 'Create System Extract'],
    ['e', 'Create ECUExtract'],
    ['isolar', 'ISOLAR-A', { more: 1 }]
]);

byId('openWithMenu').innerHTML = menu([
    ['ecugreen', 'RTE Editor'],
    ['chip', 'Mapping Editor'],
    ['chip', 'System Data Mapping Editor'],
    ['chip', 'SWC To ECU Mapping Editor'],
    ['chip', 'EndToEndProtection Configuration Editor'],
    ['comp', 'Composition Editor'],
    ['signal', 'Auto Signal Mapping'],
    ['ecupink', 'Align Rte Configuration Editor'],
    ['ecupink', 'Ecu Partition Editor', { hover: 1 }],
    ['chip', 'System Editor'],
    ['pencil', 'Generic Editor']
]);
```
